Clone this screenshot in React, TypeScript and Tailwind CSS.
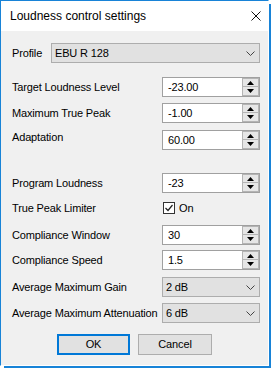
import React from 'react';

const SpinBox: React.FC<{ value: string }> = ({ value }) => (
    <div className="flex h-[20px] w-[98px] border border-[#a0a0a0] bg-white">
        <div className="flex flex-1 items-center pl-[5px] leading-none">{value}</div>
        <div className="flex w-[17px] flex-col">
            <div className="flex h-[9px] items-center justify-center border border-[#b4b4b4] bg-[#e6e6e6]">
                <svg width="7" height="4" viewBox="0 0 7 4"><polygon points="3.5,0 7,4 0,4" fill="#000" /></svg>
            </div>
            <div className="flex h-[9px] items-center justify-center border border-t-0 border-[#b4b4b4] bg-[#e6e6e6]">
                <svg width="7" height="4" viewBox="0 0 7 4"><polygon points="0,0 7,0 3.5,4" fill="#000" /></svg>
            </div>
        </div>
    </div>
);

const Combo: React.FC<{ value: string; className?: string }> = ({ value, className = '' }) => (
    <div className={`flex h-[20px] items-center justify-between border border-[#adadad] bg-[#e1e1e1] pl-[3px] pr-[4px] ${className}`}>
        <span>{value}</span>
        <svg width="9" height="5" viewBox="0 0 9 5">
            <polyline points="0.5,0.5 4.5,4.5 8.5,0.5" fill="none" stroke="#444" strokeWidth="1" />
        </svg>
    </div>
);

const Row: React.FC<{ label: string; className?: string; children: React.ReactNode }> = ({ label, className = '', children }) => (
    <div className={`flex h-[20px] items-center ${className}`}>
        <div className="w-[150px] whitespace-nowrap">{label}</div>
        {children}
    </div>
);

const App: React.FC = () => {
    return (
        <div className="h-[368px] w-[271px] bg-white text-[11px] tracking-[-0.15px] text-black" style={{ fontFamily: '"Liberation Sans", Arial, sans-serif' }}>
            <div className="flex h-[366px] w-[269px] flex-col border-t border-l border-r border-b border-t-[#1883d7] border-l-[#1883d7] border-r-white border-b-white shadow-[3px_3px_0_-1px_#1883d7]">
                {/* title bar */}
                <div className="flex h-[30px] items-center justify-between bg-white pl-[9px] pr-[7px]">
                    <span className="text-[12px] tracking-normal">Loudness control settings</span>
                    <svg width="10" height="10" viewBox="0 0 10 10">
                        <path d="M0.5 0.5 L9.5 9.5 M9.5 0.5 L0.5 9.5" stroke="#111" strokeWidth="1" fill="none" />
                    </svg>
                </div>

                <div className="flex flex-1 flex-col bg-[#f0f0f0] pl-[11px] pr-[8px] pt-[12px]">
                    <div className="flex h-[20px] items-center">
                        <div className="w-[39px]">Profile</div>
                        <Combo value="EBU R 128" className="flex-1" />
                    </div>

                    <Row label="Target Loudness Level" className="mt-[14px]">
                        <SpinBox value="-23.00" />
                    </Row>
                    <Row label="Maximum True Peak" className="mt-[6px]">
                        <SpinBox value="-1.00" />
                    </Row>
                    <div className="mt-[7px] flex h-[20px] items-start">
                        <div className="-mt-[1px] w-[150px]">Adaptation</div>
                        <SpinBox value="60.00" />
                    </div>

                    <Row label="Program Loudness" className="mt-[23px]">
                        <SpinBox value="-23" />
                    </Row>
                    <Row label="True Peak Limiter" className="mt-[5px]">
                        <div className="flex items-center">
                            <div className="ml-[1px] flex h-[12px] w-[12px] items-center justify-center border border-[#333] bg-white">
                                <svg width="10" height="10" viewBox="0 0 10 10">
                                    <polyline points="1.5,5 4,7.5 8.5,2" fill="none" stroke="#222" strokeWidth="1.2" />
                                </svg>
                            </div>
                            <span className="ml-[4px]">On</span>
                        </div>
                    </Row>
                    <Row label="Compliance Window" className="mt-[7px]">
                        <SpinBox value="30" />
                    </Row>
                    <Row label="Compliance Speed" className="mt-[5px]">
                        <SpinBox value="1.5" />
                    </Row>
                    <Row label="Average Maximum Gain" className="mt-[7px]">
                        <Combo value="2 dB" className="w-[98px]" />
                    </Row>
                    <Row label="Average Maximum Attenuation" className="mt-[6px]">
                        <Combo value="6 dB" className="w-[98px]" />
                    </Row>

                    <div className="mt-[11px] flex justify-center gap-[8px] pr-[3px]">
                        <button className="flex h-[21px] w-[73px] items-center justify-center border-2 border-[#0078d7] bg-[#e1e1e1]">OK</button>
                        <button className="flex h-[21px] w-[74px] items-center justify-center border border-[#adadad] bg-[#e1e1e1]">Cancel</button>
                    </div>
                </div>
            </div>
        </div>
    );
};

export default App;
